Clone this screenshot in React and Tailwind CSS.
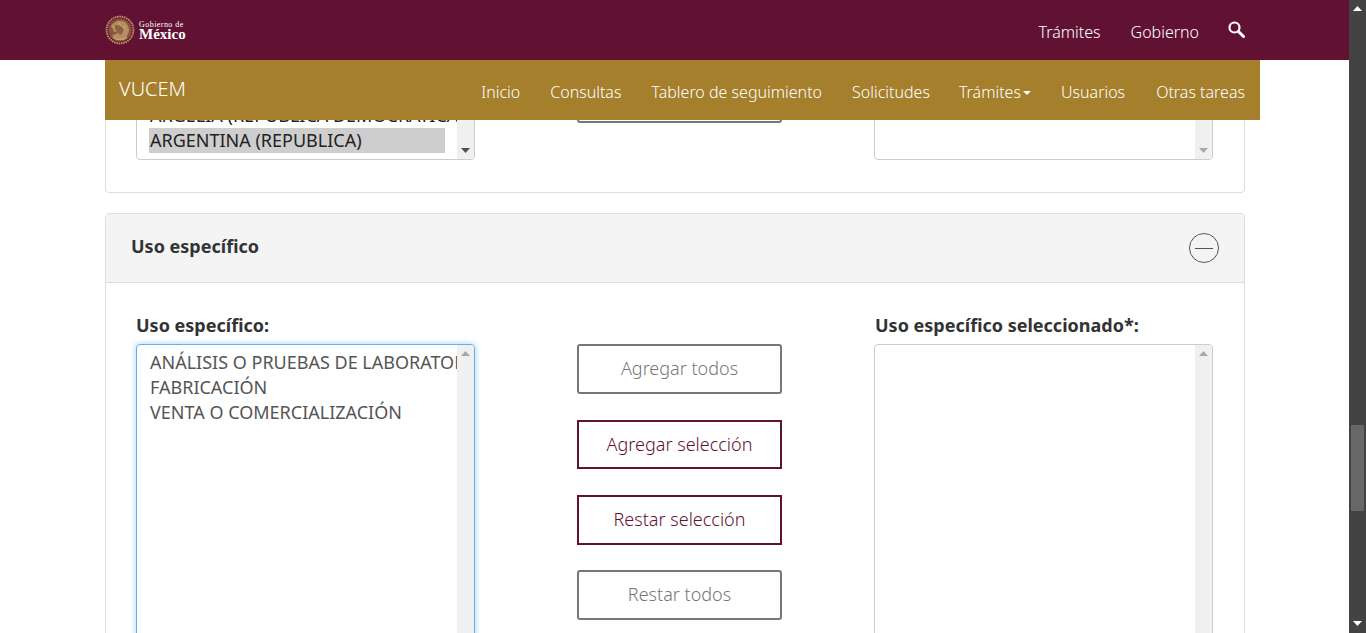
const font = { fontFamily: '"Noto Sans", "Open Sans", sans-serif' };

function Arrow({ up, color }) {
  return (
    <svg width="9" height="5" viewBox="0 0 9 5" className="block">
      <path d={up ? 'M4.5 0L9 5H0z' : 'M0 0h9L4.5 5z'} fill={color} />
    </svg>
  );
}

function Emblem() {
  return (
    <svg width="30" height="30" viewBox="0 0 30 30" className="shrink-0">
      <circle cx="15" cy="15" r="13.4" fill="none" stroke="#b8915f" strokeWidth="2" strokeDasharray="1.6 0.7" />
      <circle cx="15" cy="15" r="11.6" fill="#8a5240" />
      <path d="M6 11c3-4 7-6 10-5 4 0 7 3 8 8 0 4-2 8-6 10-4 1-9 0-11-4 2 0 5-1 6-3-3-1-6-3-7-6z" fill="#b5905f" />
      <path d="M10 10c3 0 6 1 8 3 1 2 0 5-2 7-3-1-5-4-6-7z" fill="#8f6048" />
      <path d="M14 8l2 3M19 11l1 3M8 15l3 2" stroke="#d0ad7c" strokeWidth="1" />
      <path d="M8 22c3 3 10 4 14 0" fill="none" stroke="#c9a46f" strokeWidth="1.4" />
    </svg>
  );
}

function ListBox({ rows, selected, height, focused, dark, bottom }) {
  return (
    <div
      className={`relative flex overflow-hidden rounded-[4px] border bg-white ${focused ? 'border-[#66afe9] shadow-[0_0_6px_rgba(102,175,233,0.6)]' : 'border-[#ccc]'} ${height}`}
    >
      <div className={`flex flex-1 flex-col overflow-hidden pl-3 text-[18px] leading-[25px] ${bottom ? 'justify-end pb-[6px] text-[#222]' : 'pt-[5px] text-[#555]'}`}>
        {rows.map((row) => (
          <div key={row} className={`w-[296px] whitespace-nowrap pl-px ${row === selected ? 'bg-[#cecece]' : ''}`}>
            {row}
          </div>
        ))}
      </div>
      <div className="flex w-[17px] shrink-0 flex-col justify-between bg-[#f0f0f0] px-1 py-[6px]">
        <Arrow up color="#a8a8a8" />
        <Arrow color={dark ? '#505050' : '#a8a8a8'} />
      </div>
    </div>
  );
}

function ActionButton({ label, active, className }) {
  return (
    <button
      className={`flex w-[205px] items-center justify-center border-2 bg-white pb-px text-[18px] font-light ${active ? 'border-[#611232] text-[#611232]' : 'rounded-[3px] border-[#777] text-[#777]'} ${className}`}
    >
      {label}
    </button>
  );
}

function Header() {
  return (
    <div className="absolute inset-x-0 top-0 z-10">
      <div className="h-[60px] bg-[#611232]">
        <div className="ml-[105px] flex h-full w-[1140px] items-center justify-between">
          <div className="flex items-center gap-[4px]">
            <Emblem />
            <div className="pt-[1px] text-white" style={{ fontFamily: '"Liberation Serif", serif' }}>
              <div className="text-[8px] leading-[8px] tracking-[0.45px]">Gobierno de</div>
              <div className="text-[15px] font-bold leading-[11px]">México</div>
            </div>
          </div>
          <div className="flex items-center gap-[30px] text-[16px] font-light text-white">
            <span className="pt-[4px]">Trámites</span>
            <span className="pt-[4px]">Gobierno</span>
            <svg width="17" height="17" viewBox="0 0 17 17" className="-ml-px mb-[2px]">
              <circle cx="6.5" cy="6.5" r="5" fill="none" stroke="#fff" strokeWidth="2.2" />
              <path d="M10.5 10.5L15.5 15.5" stroke="#fff" strokeWidth="3" strokeLinecap="round" />
            </svg>
          </div>
        </div>
      </div>
      <div className="ml-[105px] flex h-[60px] w-[1155px] items-center justify-between bg-[#a57f2c] pl-[14px] pr-[15px] text-white">
        <span className="pb-[2px] text-[20px] font-light">VUCEM</span>
        <div className="flex items-center gap-[30px] pt-[4px] text-[16px] font-light">
          <span>Inicio</span>
          <span>Consultas</span>
          <span>Tablero de seguimiento</span>
          <span>Solicitudes</span>
          <span className="-ml-px flex items-center gap-[2px]">
            Trámites
            <svg width="8" height="4" viewBox="0 0 8 4" className="mt-[2px]">
              <path d="M0 0h8L4 4z" fill="#fff" />
            </svg>
          </span>
          <span>Usuarios</span>
          <span className="ml-px">Otras tareas</span>
        </div>
      </div>
    </div>
  );
}

function Scrollbar() {
  return (
    <div className="flex h-full w-[17px] shrink-0 flex-col items-center bg-[#434343] pt-[6px]">
      <Arrow up color="#fff" />
      <div className="mt-[414px] h-[86px] w-[13px] bg-[#686868]" />
      <div className="mt-[110px]">
        <Arrow color="#fff" />
      </div>
    </div>
  );
}

export default function App() {
  return (
    <div className="flex h-[633px] w-full overflow-hidden bg-white" style={font}>
      <div className="relative flex-1 overflow-hidden">
        <Header />
        <div className="ml-[105px] w-[1140px] pt-[39px]">
          <div className="grid grid-cols-[339px_205px_339px] justify-between rounded-[4px] border border-[#ddd] pb-[32px] pl-[30px] pr-[31px]">
            <ListBox
              height="h-[120px]"
              bottom
              dark
              rows={['ARGELIA (REPUBLICA DEMOCRATICA Y POPULAR)', 'ARGENTINA (REPUBLICA)']}
              selected="ARGENTINA (REPUBLICA)"
            />
            <div className="flex translate-x-[5px] flex-col justify-end pb-[37px]">
              <ActionButton label="Restar todos" className="h-[50px]" />
            </div>
            <ListBox height="h-[120px]" rows={[]} />
          </div>

          <div className="mt-[20px] rounded-[4px] border border-[#ddd]">
            <div className="flex h-[69px] items-center justify-between border-b border-[#ddd] bg-[#f4f4f4] px-[25px]">
              <span className="pb-[4px] text-[18px] font-bold text-[#333]">Uso específico</span>
              <svg width="30" height="30" viewBox="0 0 30 30">
                <circle cx="15" cy="15" r="14.5" fill="none" stroke="#555" />
                <path d="M6 15.5h18" stroke="#555" />
              </svg>
            </div>
            <div className="grid grid-cols-[339px_205px_339px] justify-between pl-[30px] pr-[31px] pt-[30px]">
              <div>
                <div className="mb-[6px] h-[25px] text-[18px] font-bold leading-[25px] text-[#333]">Uso específico:</div>
                <ListBox
                  height="h-[400px]"
                  focused
                  rows={['ANÁLISIS O PRUEBAS DE LABORATORIO', 'FABRICACIÓN', 'VENTA O COMERCIALIZACIÓN']}
                />
              </div>
              <div className="flex translate-x-[5px] flex-col gap-[26px] pt-[31px]">
                <ActionButton label="Agregar todos" className="h-[50px]" />
                <ActionButton label="Agregar selección" active className="h-[49px]" />
                <ActionButton label="Restar selección" active className="h-[50px]" />
                <ActionButton label="Restar todos" className="-mt-px h-[50px]" />
              </div>
              <div>
                <div className="mb-[6px] h-[25px] pl-px text-[18px] font-bold leading-[25px] text-[#333]">Uso específico seleccionado*:</div>
                <ListBox height="h-[400px]" rows={[]} />
              </div>
            </div>
          </div>
        </div>
      </div>
      <Scrollbar />
    </div>
  );
}
